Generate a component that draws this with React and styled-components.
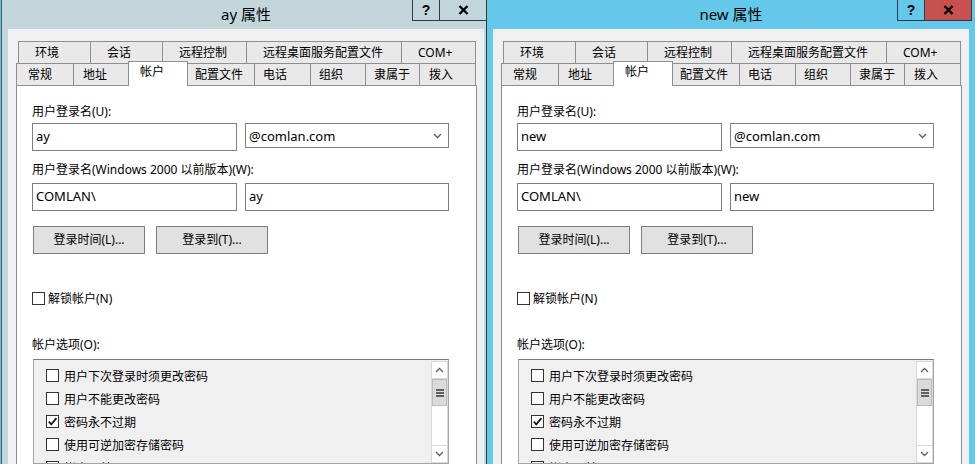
import React from "react";
import styled, { createGlobalStyle } from "styled-components";

const GlobalStyle = createGlobalStyle`
  html, body {
    margin: 0;
    padding: 0;
    overflow: hidden;
  }
  body {
    width: 975px;
    height: 464px;
    background: #63c8e8;
    font-family: "Noto Sans", "Noto Sans CJK SC", sans-serif;
    color: #000;
  }
`;

const Desktop = styled.div`
  position: relative;
  width: 975px;
  height: 464px;
  overflow: hidden;
`;

const Frame = styled.div`
  position: absolute;
  top: 0;
  left: ${(p) => p.$left}px;
  z-index: ${(p) => (p.$active ? 2 : 1)};
  width: 490px;
  height: 520px;
  box-sizing: border-box;
  border: 1px solid ${(p) => (p.$active ? "#2e3b41" : "#50585b")};
  border-top: none;
  background: ${(p) => (p.$active ? "#63c8e9" : "#c3d6dc")};
  display: flex;
  flex-direction: column;
`;

const TitleBar = styled.div`
  height: 29px;
  flex: none;
  display: grid;
  grid-template-columns: 1fr auto 1fr;
  align-items: start;
`;

const Title = styled.div`
  grid-column: 2;
  font-size: 15px;
  line-height: 29px;
  white-space: nowrap;
`;

const Caption = styled.div`
  grid-column: 3;
  justify-self: end;
  display: flex;
  margin-right: 3px;
`;

const CapBtn = styled.div`
  box-sizing: border-box;
  width: ${(p) => p.$w}px;
  height: 21px;
  margin-left: ${(p) => (p.$first ? 0 : -1)}px;
  border: 1px solid #333b3e;
  border-top: none;
  background: ${(p) => p.$bg || "transparent"};
  display: flex;
  align-items: center;
  justify-content: center;
  font-family: "Liberation Sans", sans-serif;
  font-weight: bold;
  font-size: 14px;
  color: #000;
`;

const Client = styled.div`
  flex: 1;
  margin: 0 6px;
  background: #f0f0f0;
  padding: 12px 7px 0 8px;
  display: flex;
  flex-direction: column;
`;

const TabRow = styled.div`
  display: flex;
  height: 22px;
  margin-left: ${(p) => p.$indent || 0}px;
  position: relative;
  z-index: ${(p) => (p.$front ? 2 : 1)};
`;

const Tab = styled.div`
  box-sizing: border-box;
  flex: none;
  width: ${(p) => p.$w}px;
  height: 22px;
  margin-left: -1px;
  &:first-child {
    margin-left: 0;
  }
  border: 1px solid #8e8f8f;
  border-bottom: none;
  background: #e9e9e9;
  padding-left: ${(p) => p.$pad}px;
  font-size: 12px;
  line-height: 21px;
  white-space: nowrap;
`;

const ActiveTab = styled(Tab)`
  position: relative;
  z-index: 3;
  height: 25px;
  margin-top: -2px;
  margin-left: -3px;
  margin-right: -2px;
  background: #fff;
  line-height: 19px;
  padding-top: 0;
`;

const Panel = styled.div`
  flex: 1;
  background: #fff;
  border: 1px solid #8e8f8f;
  padding: 0 0 0 15px;
  position: relative;
  z-index: 1;
`;

const Label = styled.div`
  margin-top: ${(p) => p.$mt}px;
  font-size: 12px;
  line-height: 16px;
  white-space: nowrap;
`;

const FieldRow = styled.div`
  display: flex;
  align-items: flex-start;
  gap: 8px;
  margin-top: ${(p) => p.$mt}px;
`;

const TextBox = styled.div`
  box-sizing: border-box;
  width: ${(p) => p.$w}px;
  height: 28px;
  border: 1px solid #7f7f7f;
  padding-left: 3px;
  font-size: 13px;
  line-height: 25px;
  background: #fff;
`;

const Select = styled.div`
  box-sizing: border-box;
  width: 204px;
  height: 25px;
  border: 1px solid #7f7f7f;
  padding: 0 6px 0 3px;
  display: flex;
  align-items: center;
  justify-content: space-between;
  font-size: 13px;
  background: #fff;
`;

const ButtonRow = styled.div`
  display: flex;
  gap: 11px;
  margin: 15px 0 0 1px;
`;

const PushButton = styled.div`
  box-sizing: border-box;
  width: 112px;
  height: 28px;
  border: 1px solid #7d7d7d;
  background: #e1e1e1;
  font-size: 12px;
  line-height: 26px;
  text-align: center;
`;

const CheckRow = styled.div`
  display: flex;
  align-items: center;
  gap: ${(p) => p.$gap}px;
  height: ${(p) => p.$h}px;
  margin-top: ${(p) => p.$mt || 0}px;
  padding-left: ${(p) => p.$pl || 0}px;
  font-size: 12px;
  white-space: nowrap;
`;

const Box = styled.span`
  box-sizing: border-box;
  flex: none;
  width: 13px;
  height: 13px;
  border: 1px solid #333;
  background: #fff;
  display: flex;
  align-items: center;
  justify-content: center;
`;

const ListBox = styled.div`
  box-sizing: border-box;
  width: 416px;
  height: 105px;
  margin: 6px 0 0 1px;
  border: 1px solid #a3a3a3;
  border-top-color: #7a7a7a;
  background: #f0f0f0;
  display: flex;
  overflow: hidden;
`;

const Items = styled.div`
  flex: 1;
  padding-top: 4px;
`;

const ScrollBar = styled.div`
  box-sizing: border-box;
  width: 17px;
  flex: none;
  margin: 1px 0 0;
  background: #fff;
  border: 1px solid #d9d9d9;
  display: flex;
  flex-direction: column;
`;

const ArrowBtn = styled.div`
  height: 16px;
  flex: none;
  display: flex;
  align-items: center;
  justify-content: center;
  border-bottom: ${(p) => (p.$down ? "none" : "1px solid #d9d9d9")};
  border-top: ${(p) => (p.$down ? "1px solid #d9d9d9" : "none")};
`;

const Thumb = styled.div`
  height: 25px;
  flex: none;
  background: #dadada;
  border: 1px solid #bcbcbc;
  display: flex;
  align-items: center;
  justify-content: center;
`;

const Track = styled.div`
  flex: 1;
`;

const Check = () => (
  <svg width="11" height="11" viewBox="0 0 11 11">
    <path d="M1.8 5.6 L4.3 8.3 L9.4 2.2" fill="none" stroke="#1a1a1a" strokeWidth="1.8" />
  </svg>
);

const CloseGlyph = () => (
  <svg width="11" height="10" viewBox="0 0 11 10">
    <path d="M1.5 1 L9.5 9 M9.5 1 L1.5 9" stroke="#000" strokeWidth="2.4" />
  </svg>
);

const Chevron = ({ down }) => (
  <svg width="9" height="6" viewBox="0 0 9 6">
    <path
      d={down ? "M1 1 L4.5 4.5 L8 1" : "M1 5 L4.5 1.5 L8 5"}
      fill="none"
      stroke="#606060"
      strokeWidth="1.3"
    />
  </svg>
);

const Grip = () => (
  <svg width="8" height="8" viewBox="0 0 8 8">
    <rect x="0" y="0" width="8" height="2" fill="#606060" />
    <rect x="0" y="3" width="8" height="2" fill="#606060" />
    <rect x="0" y="6" width="8" height="2" fill="#606060" />
  </svg>
);

const backTabs = [
  { t: "环境", w: 73 },
  { t: "会话", w: 73 },
  { t: "远程控制", w: 85 },
  { t: "远程桌面服务配置文件", w: 156 },
  { t: "COM+", w: 75 },
];

const frontTabs = [
  { t: "常规", w: 58, pad: 11 },
  { t: "地址", w: 58, pad: 9 },
  { t: "帐户", w: 60, pad: 11, active: true },
  { t: "配置文件", w: 70, pad: 9 },
  { t: "电话", w: 57, pad: 8 },
  { t: "组织", w: 56, pad: 8 },
  { t: "隶属于", w: 55, pad: 8 },
  { t: "拨入", w: 57, pad: 9 },
];

const options = [
  { t: "用户下次登录时须更改密码" },
  { t: "用户不能更改密码" },
  { t: "密码永不过期", checked: true },
  { t: "使用可逆加密存储密码" },
  { t: "帐户已禁用" },
];

const PropertiesWindow = ({ name, left, active }) => (
  <Frame $left={left} $active={active}>
    <TitleBar>
      <Title>{name} 属性</Title>
      <Caption>
        <CapBtn $w={28} $first>?</CapBtn>
        <CapBtn $w={48} $bg={active ? "#c75050" : undefined}>
          <CloseGlyph />
        </CapBtn>
      </Caption>
    </TitleBar>
    <Client>
      <TabRow $indent={2}>
        {backTabs.map((tab) => (
          <Tab key={tab.t} $w={tab.w} $pad={16}>
            {tab.t}
          </Tab>
        ))}
      </TabRow>
      <TabRow $front>
        {frontTabs.map((tab) =>
          tab.active ? (
            <ActiveTab key={tab.t} $w={tab.w} $pad={tab.pad}>
              {tab.t}
            </ActiveTab>
          ) : (
            <Tab key={tab.t} $w={tab.w} $pad={tab.pad}>
              {tab.t}
            </Tab>
          )
        )}
      </TabRow>
      <Panel>
        <Label $mt={18}>用户登录名(U):</Label>
        <FieldRow $mt={3}>
          <TextBox $w={205}>{name}</TextBox>
          <Select>
            <span>@comlan.com</span>
            <Chevron down />
          </Select>
        </FieldRow>
        <Label $mt={11}>用户登录名(Windows 2000 以前版本)(W):</Label>
        <FieldRow $mt={5}>
          <TextBox $w={205}>COMLAN\</TextBox>
          <TextBox $w={204}>{name}</TextBox>
        </FieldRow>
        <ButtonRow>
          <PushButton>登录时间(L)...</PushButton>
          <PushButton>登录到(T)...</PushButton>
        </ButtonRow>
        <CheckRow $h={16} $gap={3} $mt={36}>
          <Box />
          <span>解锁帐户(N)</span>
        </CheckRow>
        <Label $mt={31}>帐户选项(O):</Label>
        <ListBox>
          <Items>
            {options.map((o) => (
              <CheckRow key={o.t} $h={23} $gap={5} $pl={12}>
                <Box>{o.checked && <Check />}</Box>
                <span>{o.t}</span>
              </CheckRow>
            ))}
          </Items>
          <ScrollBar>
            <ArrowBtn>
              <Chevron />
            </ArrowBtn>
            <Thumb>
              <Grip />
            </Thumb>
            <Track />
            <ArrowBtn $down>
              <Chevron down />
            </ArrowBtn>
          </ScrollBar>
        </ListBox>
      </Panel>
    </Client>
  </Frame>
);

export default function App() {
  return (
    <Desktop>
      <GlobalStyle />
      <PropertiesWindow name="ay" left={1} />
      <PropertiesWindow name="new" left={486} active />
    </Desktop>
  );
}
